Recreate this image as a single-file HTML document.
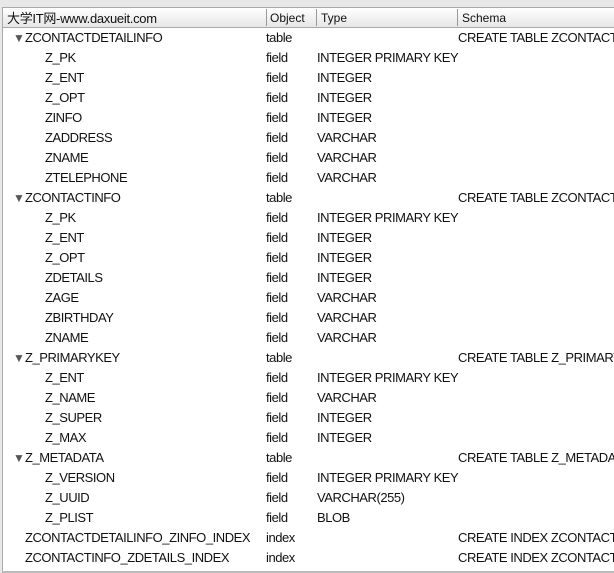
<!DOCTYPE html><html><head><style>
body{margin:0;width:614px;height:573px;background:#e8e8e8;font-family:"Liberation Sans","Noto Sans CJK SC",sans-serif;font-size:13px;letter-spacing:-0.45px;color:#111;overflow:hidden;position:relative}
#box{position:absolute;left:2px;top:7px;width:612px;height:563px;background:#fff;border-left:1px solid #aaa;border-top:1px solid #aaa;border-bottom:2px solid #bbb;overflow:hidden}
#hd{position:absolute;left:0;top:0;height:19px;width:620px;background:linear-gradient(#fff,#e6e6e6);border-bottom:1px solid #aaa;font-size:12px;letter-spacing:0}
#hd span{position:absolute;top:3px}
.sep{position:absolute;top:1px;width:1px;height:17px;background:#999}
.r{position:absolute;left:0;height:20px;line-height:20px;width:620px}
.r span{position:absolute;white-space:nowrap}
.a{left:22px}.b{left:42px}.o{left:263px}.t{left:314px}.s{left:455px}
.tri{left:10px;font-size:12px;color:#555}
</style></head><body><div id="box">
<div id="hd"><span style="left:4px;font-size:13px;top:0;letter-spacing:-0.3px">大学IT网-www.daxueit.com</span><div class="sep" style="left:263px"></div><span style="left:267px">Object</span><div class="sep" style="left:313px"></div><span style="left:318px">Type</span><div class="sep" style="left:454px"></div><span style="left:459px">Schema</span></div>
<div id="rows"></div></div>
<script>
var d=[["T","ZCONTACTDETAILINFO","table","","CREATE TABLE ZCONTACTDETAILINFO"],["F","Z_PK","field","INTEGER PRIMARY KEY"],["F","Z_ENT","field","INTEGER"],["F","Z_OPT","field","INTEGER"],["F","ZINFO","field","INTEGER"],["F","ZADDRESS","field","VARCHAR"],["F","ZNAME","field","VARCHAR"],["F","ZTELEPHONE","field","VARCHAR"],
["T","ZCONTACTINFO","table","","CREATE TABLE ZCONTACTINFO"],["F","Z_PK","field","INTEGER PRIMARY KEY"],["F","Z_ENT","field","INTEGER"],["F","Z_OPT","field","INTEGER"],["F","ZDETAILS","field","INTEGER"],["F","ZAGE","field","VARCHAR"],["F","ZBIRTHDAY","field","VARCHAR"],["F","ZNAME","field","VARCHAR"],
["T","Z_PRIMARYKEY","table","","CREATE TABLE Z_PRIMARYKEY"],["F","Z_ENT","field","INTEGER PRIMARY KEY"],["F","Z_NAME","field","VARCHAR"],["F","Z_SUPER","field","INTEGER"],["F","Z_MAX","field","INTEGER"],
["T","Z_METADATA","table","","CREATE TABLE Z_METADATA"],["F","Z_VERSION","field","INTEGER PRIMARY KEY"],["F","Z_UUID","field","VARCHAR(255)"],["F","Z_PLIST","field","BLOB"],
["I","ZCONTACTDETAILINFO_ZINFO_INDEX","index","","CREATE INDEX ZCONTACTDETAILINFO"],["I","ZCONTACTINFO_ZDETAILS_INDEX","index","","CREATE INDEX ZCONTACTINFO"]];
var h="";d.forEach(function(x,i){h+='<div class="r" style="top:'+(20+i*20)+'px">'+(x[0]=="T"?'<span class="tri">▼</span>':'')+'<span class="'+(x[0]=="F"?"b":"a")+'">'+x[1]+'</span><span class="o">'+x[2]+'</span><span class="t">'+x[3]+'</span><span class="s">'+(x[4]||"")+'</span></div>'});
document.getElementById("rows").innerHTML=h;
</script></body></html>
